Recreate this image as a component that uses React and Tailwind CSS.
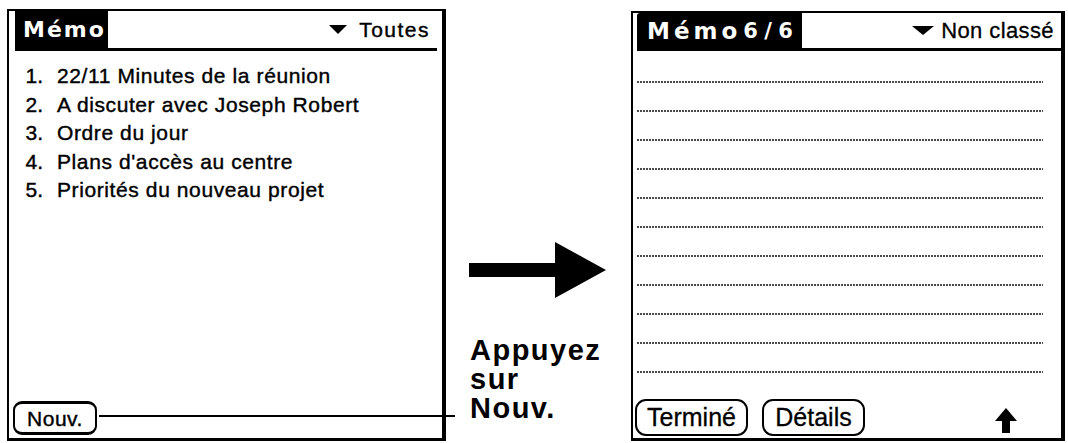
export default function App() {
  const palm = { fontFamily: '"Liberation Sans", Arial, sans-serif' };
  const items = [
    "22/11 Minutes de la réunion",
    "A discuter avec Joseph Robert",
    "Ordre du jour",
    "Plans d'accès au centre",
    "Priorités du nouveau projet",
  ];
  const lines = Array.from({ length: 11 });
  return (
    <div className="relative w-[1068px] h-[443px] bg-white flex items-start text-black overflow-hidden" style={palm}>
      {/* Left screen */}
      <div className="ml-[7px] mt-[9px] w-[439px] h-[432px] border-t-2 border-l-2 border-r-4 border-b-[3px] border-black flex flex-col">
        <div className="ml-[6px] mr-[5px] h-[40px] border-b-[3px] border-black flex items-stretch">
          <div className="w-[93px] bg-black text-white flex items-center pl-[8px] pt-[1px]">
            <span className="font-['DejaVu_Sans'] font-bold text-[22px] tracking-[2px] leading-none whitespace-nowrap">Mémo</span>
          </div>
          <div className="flex-1 flex items-center justify-end pr-[7px] gap-[12px]">
            <svg width="18" height="9" viewBox="0 0 18 9"><polygon points="0,0 18,0 9,9" fill="black" /></svg>
            <span className="text-[21px] tracking-[1.5px] leading-none [-webkit-text-stroke:0.4px_black]">Toutes</span>
          </div>
        </div>
        <ul className="mt-[11px] ml-[6px] [-webkit-text-stroke:0.4px_black]">
          {items.map((t, i) => (
            <li key={i} className="flex text-[21px] leading-[28.5px]">
              <span className="w-[28px] text-right">{i + 1}.</span>
              <span className="ml-[14px] tracking-[0.6px]">{t}</span>
            </li>
          ))}
        </ul>
        <div className="mt-auto mb-[3px] ml-[4px]">
          <div className="w-[84px] h-[34px] border-2 border-t-[3px] border-b-[3px] border-black rounded-[9px] flex items-center justify-center text-[21px] leading-none tracking-[0.5px] [-webkit-text-stroke:0.4px_black]">
            Nouv.
          </div>
        </div>
      </div>

      {/* Middle annotation */}
      <div className="w-[185px] pl-[23px] pt-[242px] flex flex-col">
        <svg width="137" height="56" viewBox="0 0 137 56">
          <polygon points="0,21 86,21 86,0 137,28 86,56 86,35 0,35" fill="black" />
        </svg>
        <div className="mt-[38px] ml-[1px] font-bold text-[29px] leading-[29px] tracking-[1.5px]">
          <div>Appuyez</div>
          <div>sur</div>
          <div>Nouv.</div>
        </div>
      </div>

      {/* pointer line */}
      <div className="absolute left-[99px] top-[415px] w-[356px] h-[2px] bg-black" />

      {/* Right screen */}
      <div className="mt-[11px] w-[434px] h-[430px] border-t-2 border-l-2 border-r-4 border-b-[3px] border-black flex flex-col">
        <div className="ml-[4px] mr-0 h-[38px] border-b-[3px] border-black flex items-stretch">
          <div className="w-[165px] bg-black text-white rounded-tl-[3px] flex items-center pl-[10px] pt-[1px] font-['DejaVu_Sans'] font-bold leading-none whitespace-pre">
            <span className="text-[23px] tracking-[4px]">Mémo</span>
            <span className="ml-[2px] text-[21px] tracking-[0px] [word-spacing:-1px]">6 / 6</span>
          </div>
          <div className="flex-1 flex items-center justify-end pr-[7px] gap-[7px]">
            <svg width="22" height="9" viewBox="0 0 22 9"><polygon points="0,0 22,0 11,9" fill="black" /></svg>
            <span className="text-[22px] tracking-[0.4px] leading-none whitespace-nowrap [-webkit-text-stroke:0.3px_black]">Non classé</span>
          </div>
        </div>
        <div className="ml-[4px] mt-[30px] flex flex-col gap-[27px]">
          {lines.map((_, i) => (
            <div key={i} className="w-[406px] h-[2px] bg-[repeating-linear-gradient(to_right,#4a4a4a_0_2px,transparent_2px_3px)]" />
          ))}
        </div>
        <div className="mt-auto mb-[2px] ml-[2px] flex items-end [-webkit-text-stroke:0.3px_black]">
          <div className="w-[113px] h-[37px] border-2 border-black rounded-[11px] flex items-center justify-center text-[25px] leading-none">
            Terminé
          </div>
          <div className="ml-[14px] w-[103px] h-[37px] border-2 border-black rounded-[11px] flex items-center justify-center text-[25px] leading-none">
            Détails
          </div>
          <svg className="ml-[130px] mb-[3px]" width="22" height="25" viewBox="0 0 22 25">
            <polygon points="11,0 22,13 15,13 15,25 7,25 7,13 0,13" fill="black" />
          </svg>
        </div>
      </div>
    </div>
  );
}
